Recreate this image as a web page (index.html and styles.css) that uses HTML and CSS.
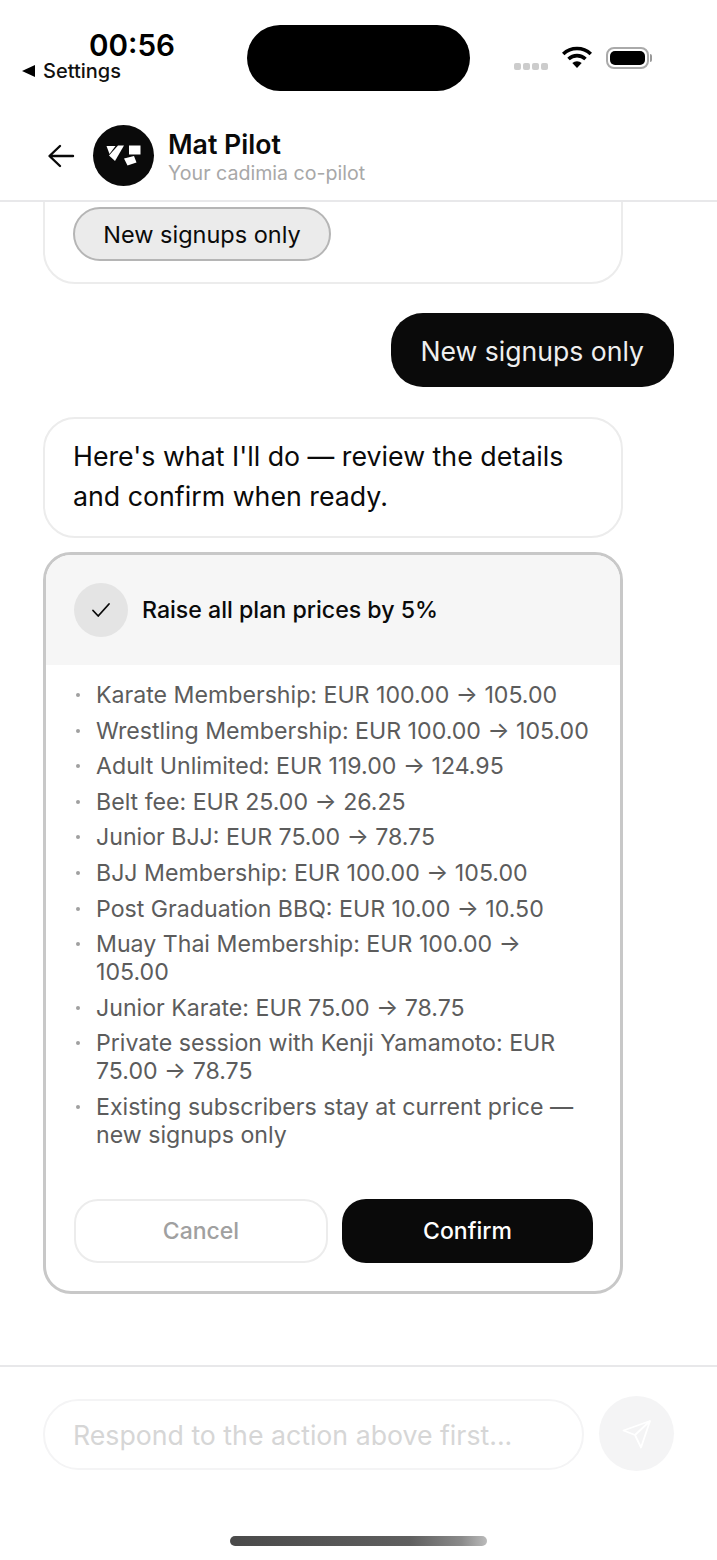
FILE: index.html
```html
<!DOCTYPE html>
<html>

<head>
  <title>Mat Pilot</title>
  <meta charset="utf-8" />
  <meta name="viewport" content="width=device-width, initial-scale=1.0" />
  <link rel="stylesheet" href="styles.css">
</head>

<body>
  <div class="status-bar">
    <div class="status-left">
      <div class="time">00:56</div>
      <div class="back-app"><span class="back-tri"></span>Settings</div>
    </div>
    <div class="island"></div>
    <div class="status-right">
      <div class="signal"><i></i><i></i><i></i><i></i></div>
      <svg class="wifi" width="30" height="22" viewBox="0 0 30 22">
        <path d="M1.200 8a20 20 0 0 1 27.600 0" fill="none" stroke="#000" stroke-width="3.600" />
        <path d="M6.500 13a12.500 12.500 0 0 1 17 0" fill="none" stroke="#000" stroke-width="3.600" />
        <path d="M10.300 17a7 7 0 0 1 9.400 0L15 22z" fill="#000" />
      </svg>
      <div class="battery"><div class="battery-fill"></div></div>
      <div class="battery-cap"></div>
    </div>
  </div>

  <header class="chat-header">
    <svg class="back-arrow" width="28" height="24" viewBox="0 0 28 24">
      <path d="M26 12H3M13 2 2.500 12 13 22" fill="none" stroke="#0a0a0a" stroke-width="2.400" stroke-linecap="round" stroke-linejoin="round" />
    </svg>
    <div class="avatar">
      <svg width="36" height="23" viewBox="105 144 36 23">
        <path d="M105.500 146h9l-6 8z" fill="#fff" />
        <path d="M117 145.500h6l-9 15.500-6-5.500z" fill="#fff" />
        <path d="M128 145.500h11.500v9H128z" fill="#fff" />
        <path d="M123 158.500l10-2.500 2.500 6.500-9 3z" fill="#fff" />
      </svg>
    </div>
    <div class="chat-title">
      <div class="chat-name">Mat Pilot</div>
      <div class="chat-sub">Your cadimia co-pilot</div>
    </div>
  </header>

  <main class="messages">
    <div class="bubble bubble-clipped">
      <button class="chip">New signups only</button>
    </div>

    <div class="bubble-user">New signups only</div>

    <div class="bubble bubble-bot">Here's what I'll do — review the details and confirm when ready.</div>

    <section class="action-card">
      <div class="action-head">
        <div class="action-check">
          <svg width="20" height="16" viewBox="0 0 20 16">
            <path d="M2 8.500 7.200 14 18 2" fill="none" stroke="#0a0a0a" stroke-width="1.800" stroke-linecap="round" stroke-linejoin="round" />
          </svg>
        </div>
        <div class="action-title">Raise all plan prices by 5%</div>
      </div>
      <ul class="action-list">
        <li>Karate Membership: EUR 100.00 → 105.00</li>
        <li>Wrestling Membership: EUR 100.00 → 105.00</li>
        <li>Adult Unlimited: EUR 119.00 → 124.95</li>
        <li>Belt fee: EUR 25.00 → 26.25</li>
        <li>Junior BJJ: EUR 75.00 → 78.75</li>
        <li>BJJ Membership: EUR 100.00 → 105.00</li>
        <li>Post Graduation BBQ: EUR 10.00 → 10.50</li>
        <li>Muay Thai Membership: EUR 100.00 → 105.00</li>
        <li>Junior Karate: EUR 75.00 → 78.75</li>
        <li>Private session with Kenji Yamamoto: EUR 75.00 → 78.75</li>
        <li>Existing subscribers stay at current price — new signups only</li>
      </ul>
      <div class="action-buttons">
        <button class="btn btn-cancel">Cancel</button>
        <button class="btn btn-confirm">Confirm</button>
      </div>
    </section>
  </main>

  <footer class="composer">
    <div class="composer-input">Respond to the action above first...</div>
    <button class="send">
      <svg width="32" height="32" viewBox="0 0 32 32">
        <path d="M29 3 2.500 12.500 14 17l6 12.500zM29 3 14 17" fill="none" stroke="#fff" stroke-width="1.800" stroke-linejoin="round" stroke-linecap="round" />
      </svg>
    </button>
  </footer>

  <div class="home-area"><div class="home-bar"></div></div>
</body>

</html>
```

FILE: styles.css
```css
* {
  box-sizing: border-box;
}

html,
body {
  margin: 0;
  height: 1560px;
  overflow: hidden;
  background: #fff;
}

body {
  display: flex;
  flex-direction: column;
  font-family: Inter, "Liberation Sans", sans-serif;
  color: #0a0a0a;
}

button {
  font-family: inherit;
  margin: 0;
}

.status-bar {
  height: 110px;
  display: flex;
  flex-shrink: 0;
  padding-top: 25px;
}

.status-left {
  width: 247px;
  padding: 2px 0 0 22px;
}

.time {
  padding-left: 67px;
  font-size: 29.600px;
  font-weight: 600;
  line-height: 36px;
  color: #000;
}

.back-app {
  display: flex;
  align-items: center;
  gap: 8px;
  font-size: 20px;
  font-weight: 500;
  line-height: 24px;
  margin-top: -4px;
  color: #111;
}

.back-tri {
  width: 0;
  height: 0;
  border-style: solid;
  border-width: 6px 13px 6px 0;
  border-color: transparent #000 transparent transparent;
}

.island {
  width: 223px;
  height: 66px;
  background: #000;
  border-radius: 33px;
}

.status-right {
  display: flex;
  align-items: center;
  height: 66px;
  padding-left: 44px;
}

.signal {
  display: flex;
  gap: 2px;
  margin: 16px 14px 0 0;
}

.signal i {
  width: 7px;
  height: 7px;
  border-radius: 2px;
  background: #ccc;
}

.wifi {
  margin: -2px 14px 0 0;
}

.battery {
  width: 43px;
  height: 22px;
  padding: 2px;
  border: 2px solid #aaa;
  border-radius: 8px;
}

.battery-fill {
  height: 100%;
  background: #000;
  border-radius: 5px;
}

.battery-cap {
  width: 2px;
  height: 8px;
  margin-left: 1px;
  background: #999;
  border-radius: 0 2px 2px 0;
}

.chat-header {
  height: 92px;
  flex-shrink: 0;
  display: flex;
  align-items: center;
  padding: 1px 0 0 47px;
  border-bottom: 2px solid #e8e8ea;
}

.back-arrow {
  margin-right: 18px;
}

.avatar {
  width: 61px;
  height: 61px;
  border-radius: 50%;
  background: #0a0a0a;
  display: flex;
  align-items: center;
  justify-content: center;
  margin-right: 14px;
}

.chat-title {
  padding-top: 3px;
}

.chat-name {
  font-size: 26.700px;
  font-weight: 600;
  line-height: 32px;
}

.chat-sub {
  font-size: 19.600px;
  line-height: 26px;
  color: #a8a8a8;
}

.messages {
  flex: 1;
  min-height: 0;
  overflow: hidden;
  padding: 0 43px;
  display: flex;
  flex-direction: column;
  align-items: flex-start;
}

.bubble {
  width: 580px;
  background: #fff;
  border: 2px solid #ececec;
  border-radius: 32px;
}

.bubble-clipped {
  margin-top: -41px;
  height: 123px;
  padding: 44px 28px 0;
  flex-shrink: 0;
}

.chip {
  display: block;
  height: 54px;
  width: 258px;
  padding: 0;
  font-size: 23.500px;
  font-weight: 400;
  color: #0a0a0a;
  background: #ebebeb;
  border: 2px solid #b5b5b5;
  border-radius: 27px;
}

.bubble-user {
  align-self: flex-end;
  margin: 29px 0 30px;
  height: 74px;
  flex-shrink: 0;
  line-height: 76px;
  padding: 0 30px 0 29px;
  font-size: 26.600px;
  color: #efefef;
  background: #0a0a0a;
  border-radius: 32px;
}

.bubble-bot {
  padding: 17px 28px;
  height: 121px;
  font-size: 26.750px;
  line-height: 40px;
  flex-shrink: 0;
}

.action-card {
  width: 580px;
  height: 742px;
  flex-shrink: 0;
  margin-top: 14px;
  border: 3px solid #c8c8c8;
  border-radius: 28px;
  overflow: hidden;
  background: #fff;
}

.action-head {
  height: 110px;
  display: flex;
  align-items: center;
  gap: 14px;
  padding: 0 28px;
  background: #f6f6f6;
}

.action-check {
  width: 54px;
  height: 54px;
  border-radius: 50%;
  background: #e4e4e4;
  display: flex;
  align-items: center;
  justify-content: center;
}

.action-title {
  font-size: 23.150px;
  font-weight: 500;
}

.action-list {
  list-style: none;
  margin: 0;
  padding: 16px 20px 0 50px;
  height: 520px;
  display: flex;
  flex-direction: column;
  gap: 7.600px;
}

.action-list li {
  position: relative;
  font-size: 23.150px;
  line-height: 28px;
  color: #5c5c5c;
}

.action-list li::before {
  content: "";
  position: absolute;
  left: -20px;
  top: 12px;
  width: 4px;
  height: 4px;
  border-radius: 50%;
  background: #a0a0a0;
}

.action-buttons {
  display: flex;
  gap: 14px;
  padding: 14px 27px 0 28px;
}

.btn {
  height: 64px;
  border-radius: 24px;
  font-size: 23px;
  font-weight: 500;
}

.btn-cancel {
  width: 254px;
  background: #fff;
  border: 2px solid #ececec;
  color: #a0a0a0;
}

.btn-confirm {
  width: 251px;
  background: #0a0a0a;
  border: 0;
  color: #fff;
}

.composer {
  height: 125px;
  flex-shrink: 0;
  display: flex;
  align-items: flex-start;
  gap: 15px;
  padding: 29px 43px 0;
  border-top: 2px solid #e8e8ea;
}

.composer-input {
  width: 541px;
  height: 71px;
  margin-top: 3px;
  padding-left: 28px;
  line-height: 69px;
  font-size: 26.700px;
  color: #d6d6d6;
  border: 2px solid #f4f4f5;
  border-radius: 36px;
}

.send {
  width: 75px;
  height: 75px;
  flex-shrink: 0;
  padding: 0;
  border: 0;
  border-radius: 50%;
  background: #f4f4f5;
  display: flex;
  align-items: center;
  justify-content: center;
}

.home-area {
  height: 70px;
  flex-shrink: 0;
  display: flex;
  justify-content: center;
  padding-top: 46px;
}

.home-bar {
  width: 257px;
  height: 10px;
  border-radius: 5px;
  background: linear-gradient(90deg, #4a4a4a 0%, #5f5f5f 70%, #8a8a8a 90%, #bbb 100%);
}
```
